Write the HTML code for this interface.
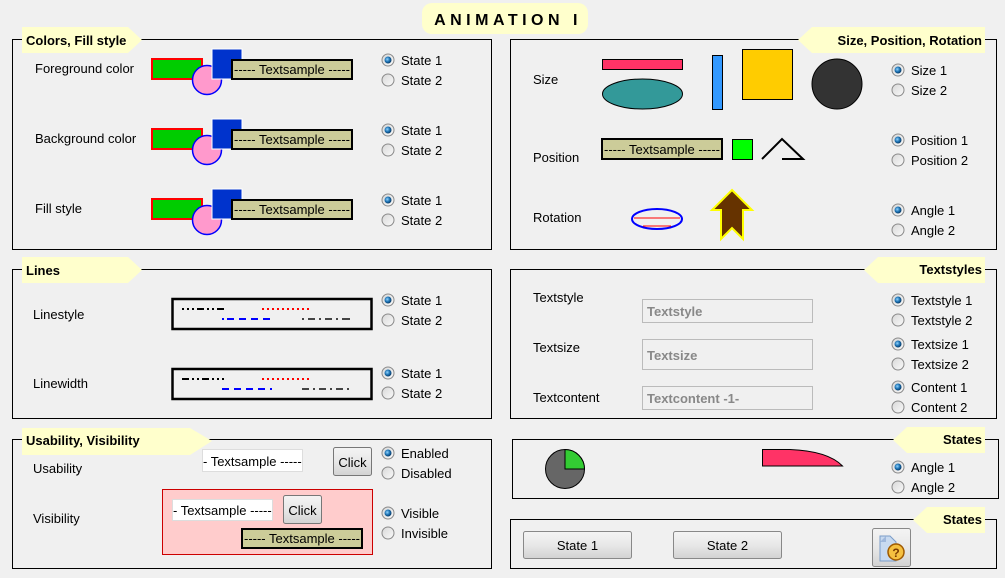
<!DOCTYPE html>
<html><head><meta charset="utf-8">
<style>
html,body{margin:0;padding:0;background:#f0f0f0;}
svg{display:block;font-family:"Liberation Sans",Arial,sans-serif;}
.t{font-size:13px;fill:#000;}
.b{font-size:13px;font-weight:bold;fill:#000;}
.g{font-size:13px;font-weight:bold;fill:#888;}
</style></head><body>
<svg width="1005" height="578" viewBox="0 0 1005 578" xmlns="http://www.w3.org/2000/svg">
<defs>
<radialGradient id="rb" cx="0.4" cy="0.4" r="0.6"><stop offset="0" stop-color="#8fd3ff"/><stop offset="0.6" stop-color="#1a6fb0"/><stop offset="1" stop-color="#0a3d6a"/></radialGradient>
<linearGradient id="rg" x1="0" y1="0" x2="1" y2="1"><stop offset="0" stop-color="#d8d8d8"/><stop offset="1" stop-color="#fafafa"/></linearGradient>
<linearGradient id="btn" x1="0" y1="0" x2="0" y2="1"><stop offset="0" stop-color="#f4f4f4"/><stop offset="0.5" stop-color="#e8e8e8"/><stop offset="1" stop-color="#d2d2d2"/></linearGradient>
<g id="r0"><circle r="6" fill="url(#rg)" stroke="#8a8a8a"/></g>
<g id="r1"><circle r="6" fill="url(#rg)" stroke="#8a8a8a"/><circle r="3.5" fill="url(#rb)"/></g>
<g id="csh">
<rect x="152" y="59" width="50" height="20" fill="#00cc00" stroke="#ff0000" stroke-width="2"/>
<circle cx="207" cy="80" r="14.5" fill="#ff99cc" stroke="#0000ff" stroke-width="1.5"/>
<rect x="212" y="49" width="30" height="30" fill="#0033cc" stroke="#fff" stroke-width="1"/>
<rect x="232" y="60" width="120" height="19" fill="#cccc99" stroke="#000" stroke-width="2"/>
<text x="292" y="74" class="t" text-anchor="middle">----- Textsample -----</text>
</g>
</defs>

<!-- title -->
<rect x="422" y="3" width="166" height="31" rx="10" fill="#ffffcc"/>
<text x="508" y="25" text-anchor="middle" style="font-size:16px;font-weight:bold;letter-spacing:4.5px">ANIMATION I</text>

<!-- panel frames -->
<g fill="none" stroke="#000" stroke-width="1">
<rect x="12.5" y="39.5" width="479" height="210"/>
<rect x="510.5" y="39.5" width="486" height="210"/>
<rect x="12.5" y="269.5" width="479" height="149"/>
<rect x="12.5" y="439.5" width="479" height="129"/>
<rect x="510.5" y="269.5" width="486" height="149"/>
<rect x="512.5" y="439.5" width="486" height="59"/>
<rect x="510.5" y="519.5" width="486" height="49"/>
</g>

<!-- tabs -->
<g fill="#ffffcc">
<polygon points="22,27 128,27 142,40 128,53 22,53"/>
<polygon points="22,257 128,257 142,270 128,283 22,283"/>
<polygon points="22,428 190,428 212,441 190,455 22,455"/>
<polygon points="812,27 985,27 985,53 812,53 798,40"/>
<polygon points="878,257 985,257 985,283 878,283 864,270"/>
<polygon points="907,427 985,427 985,453 907,453 893,440"/>
<polygon points="927,507 985,507 985,533 927,533 913,520"/>
</g>
<text x="26" y="45" class="b">Colors, Fill style</text>
<text x="26" y="275" class="b">Lines</text>
<text x="26" y="445" class="b">Usability, Visibility</text>
<text x="982" y="45" class="b" text-anchor="end">Size, Position, Rotation</text>
<text x="982" y="274" class="b" text-anchor="end">Textstyles</text>
<text x="982" y="444" class="b" text-anchor="end">States</text>
<text x="982" y="524" class="b" text-anchor="end">States</text>

<!-- panel 1 -->
<text x="35" y="73" class="t">Foreground color</text>
<text x="35" y="143" class="t">Background color</text>
<text x="35" y="213" class="t">Fill style</text>
<use href="#csh"/>
<use href="#csh" y="70"/>
<use href="#csh" y="140"/>
<use href="#r1" x="388" y="60"/><text x="401" y="65" class="t">State 1</text>
<use href="#r0" x="388" y="80"/><text x="401" y="85" class="t">State 2</text>
<use href="#r1" x="388" y="130"/><text x="401" y="135" class="t">State 1</text>
<use href="#r0" x="388" y="150"/><text x="401" y="155" class="t">State 2</text>
<use href="#r1" x="388" y="200"/><text x="401" y="205" class="t">State 1</text>
<use href="#r0" x="388" y="220"/><text x="401" y="225" class="t">State 2</text>

<!-- panel 2 -->
<text x="533" y="84" class="t">Size</text>
<text x="533" y="162" class="t">Position</text>
<text x="533" y="222" class="t">Rotation</text>
<rect x="602.5" y="59.5" width="80" height="10" fill="#ff3366" stroke="#000"/>
<ellipse cx="642.5" cy="94" rx="40" ry="15" fill="#339999" stroke="#000"/>
<rect x="712.5" y="55.5" width="10" height="54" fill="#3399ff" stroke="#000"/>
<rect x="742.5" y="49.5" width="50" height="50" fill="#ffcc00" stroke="#000"/>
<circle cx="837" cy="84" r="25" fill="#333333" stroke="#000"/>
<rect x="602" y="139" width="120" height="20" fill="#cccc99" stroke="#000" stroke-width="2"/>
<text x="662" y="154" class="t" text-anchor="middle">----- Textsample -----</text>
<rect x="732.5" y="139.5" width="20" height="20" fill="#00ff00" stroke="#000"/>
<polyline points="762,159 782,139 803,159 782,159" fill="none" stroke="#000" stroke-width="2"/>
<ellipse cx="657" cy="219" rx="25" ry="10" fill="none" stroke="#0000ff" stroke-width="2"/>
<line x1="634" y1="218" x2="680" y2="218" stroke="#ff0000"/>
<line x1="643" y1="226" x2="671" y2="226" stroke="#ff0000"/>
<polygon points="732,190 752,210 743,210 743,239 732,228 721,239 721,210 712,210" fill="#663300" stroke="#ffff00" stroke-width="2"/>
<use href="#r1" x="898" y="70"/><text x="911" y="75" class="t">Size 1</text>
<use href="#r0" x="898" y="90"/><text x="911" y="95" class="t">Size 2</text>
<use href="#r1" x="898" y="140"/><text x="911" y="145" class="t">Position 1</text>
<use href="#r0" x="898" y="160"/><text x="911" y="165" class="t">Position 2</text>
<use href="#r1" x="898" y="210"/><text x="911" y="215" class="t">Angle 1</text>
<use href="#r0" x="898" y="230"/><text x="911" y="235" class="t">Angle 2</text>

<!-- panel 3 lines -->
<text x="33" y="319" class="t">Linestyle</text>
<text x="33" y="388" class="t">Linewidth</text>
<rect x="172.5" y="299" width="199" height="30" fill="none" stroke="#000" stroke-width="2.5"/>
<rect x="172.5" y="369" width="199" height="30" fill="none" stroke="#000" stroke-width="2.5"/>
<g stroke-width="2" fill="none">
<path d="M182 309h2M187 309h2M192 309h2M197 309h7M207 309h2M212 309h2M217 309h7" stroke="#000"/>
<path d="M262 309h2M267 309h2M272 309h2M277 309h2M282 309h2M287 309h2M292 309h2M297 309h2M302 309h2M307 309h2" stroke="#f00"/>
<path d="M222 319h2M227 319h7M239 319h7M251 319h7M263 319h7" stroke="#00f"/>
<path d="M302 319h2M308 319h7M319 319h2M325 319h7M336 319h2M342 319h8" stroke="#444"/>
<path d="M182 379h7M192 379h2M197 379h2M202 379h7M212 379h2M217 379h2M222 379h2" stroke="#000"/>
<path d="M262 379h2M267 379h2M272 379h2M277 379h2M282 379h2M287 379h2M292 379h2M297 379h2M302 379h2M307 379h2" stroke="#f00"/>
<path d="M222 389h7M234 389h7M246 389h7M258 389h7M270 389h2" stroke="#00f"/>
<path d="M302 389h7M313 389h2M319 389h7M330 389h2M336 389h7M347 389h2" stroke="#444"/>
</g>
<use href="#r1" x="388" y="300"/><text x="401" y="305" class="t">State 1</text>
<use href="#r0" x="388" y="320"/><text x="401" y="325" class="t">State 2</text>
<use href="#r1" x="388" y="373"/><text x="401" y="378" class="t">State 1</text>
<use href="#r0" x="388" y="393"/><text x="401" y="398" class="t">State 2</text>

<!-- panel 4 usability -->
<text x="33" y="473" class="t">Usability</text>
<text x="33" y="523" class="t">Visibility</text>
<rect x="202.5" y="449.5" width="100" height="22" fill="#fff" stroke="#ddd"/>
<text x="203" y="466" class="t">- Textsample -----</text>
<rect x="333.5" y="447.5" width="38" height="28" rx="2" fill="url(#btn)" stroke="#777"/>
<text x="352.5" y="467" class="t" text-anchor="middle">Click</text>
<rect x="162.5" y="489.5" width="210" height="65" fill="#ffcccc" stroke="#cc0000"/>
<rect x="172.5" y="499.5" width="100" height="21" fill="#fff" stroke="#ddd"/>
<text x="173" y="515" class="t">- Textsample -----</text>
<rect x="283.5" y="495.5" width="38" height="28" rx="2" fill="url(#btn)" stroke="#777"/>
<text x="302.5" y="515" class="t" text-anchor="middle">Click</text>
<rect x="242" y="529" width="120" height="19" fill="#cccc99" stroke="#000" stroke-width="2"/>
<text x="302" y="543" class="t" text-anchor="middle">----- Textsample -----</text>
<use href="#r1" x="388" y="453"/><text x="401" y="458" class="t">Enabled</text>
<use href="#r0" x="388" y="473"/><text x="401" y="478" class="t">Disabled</text>
<use href="#r1" x="388" y="513"/><text x="401" y="518" class="t">Visible</text>
<use href="#r0" x="388" y="533"/><text x="401" y="538" class="t">Invisible</text>

<!-- panel 5 textstyles -->
<text x="533" y="302" class="t">Textstyle</text>
<text x="533" y="352" class="t">Textsize</text>
<text x="533" y="402" class="t">Textcontent</text>
<rect x="642.5" y="299.5" width="170" height="23" fill="#f0f0f0" stroke="#bbb"/>
<text x="647" y="316" class="g">Textstyle</text>
<rect x="642.5" y="339.5" width="170" height="30" fill="#f0f0f0" stroke="#bbb"/>
<text x="647" y="360" class="g">Textsize</text>
<rect x="642.5" y="386.5" width="170" height="23" fill="#f0f0f0" stroke="#bbb"/>
<text x="647" y="403" class="g">Textcontent -1-</text>
<use href="#r1" x="898" y="300"/><text x="911" y="305" class="t">Textstyle 1</text>
<use href="#r0" x="898" y="320"/><text x="911" y="325" class="t">Textstyle 2</text>
<use href="#r1" x="898" y="344"/><text x="911" y="349" class="t">Textsize 1</text>
<use href="#r0" x="898" y="364"/><text x="911" y="369" class="t">Textsize 2</text>
<use href="#r1" x="898" y="387"/><text x="911" y="392" class="t">Content 1</text>
<use href="#r0" x="898" y="407"/><text x="911" y="412" class="t">Content 2</text>

<!-- panel 6 -->
<circle cx="565" cy="469" r="19.5" fill="#666" stroke="#000"/>
<path d="M565 469 V449.5 A19.5 19.5 0 0 1 584.5 469 Z" fill="#33cc33" stroke="#000"/>
<path d="M762.5 449.5 H790 Q828 451 842.5 466 H762.5 Z" fill="#ff3366" stroke="#000"/>
<use href="#r1" x="898" y="467"/><text x="911" y="472" class="t">Angle 1</text>
<use href="#r0" x="898" y="487"/><text x="911" y="492" class="t">Angle 2</text>

<!-- panel 7 -->
<rect x="523.5" y="531.5" width="108" height="27" rx="2" fill="url(#btn)" stroke="#888"/>
<text x="577.5" y="550" class="t" text-anchor="middle">State 1</text>
<rect x="673.5" y="531.5" width="108" height="27" rx="2" fill="url(#btn)" stroke="#888"/>
<text x="727.5" y="550" class="t" text-anchor="middle">State 2</text>
<rect x="872.5" y="528.5" width="38" height="38" rx="2" fill="url(#btn)" stroke="#888"/>
<path d="M880 536 h10 l6 6 v19 h-16 z" fill="#c8daf0" stroke="#7a9cc8"/>
<path d="M880 542 l6 -6 v6 z" fill="#9fb8dc"/>
<circle cx="896" cy="552" r="8" fill="#f5c040" stroke="#a05a00" stroke-width="1.5"/>
<text x="896" y="557" text-anchor="middle" style="font-size:12px;font-weight:bold;fill:#7a3a00">?</text>
</svg>
</body></html>
